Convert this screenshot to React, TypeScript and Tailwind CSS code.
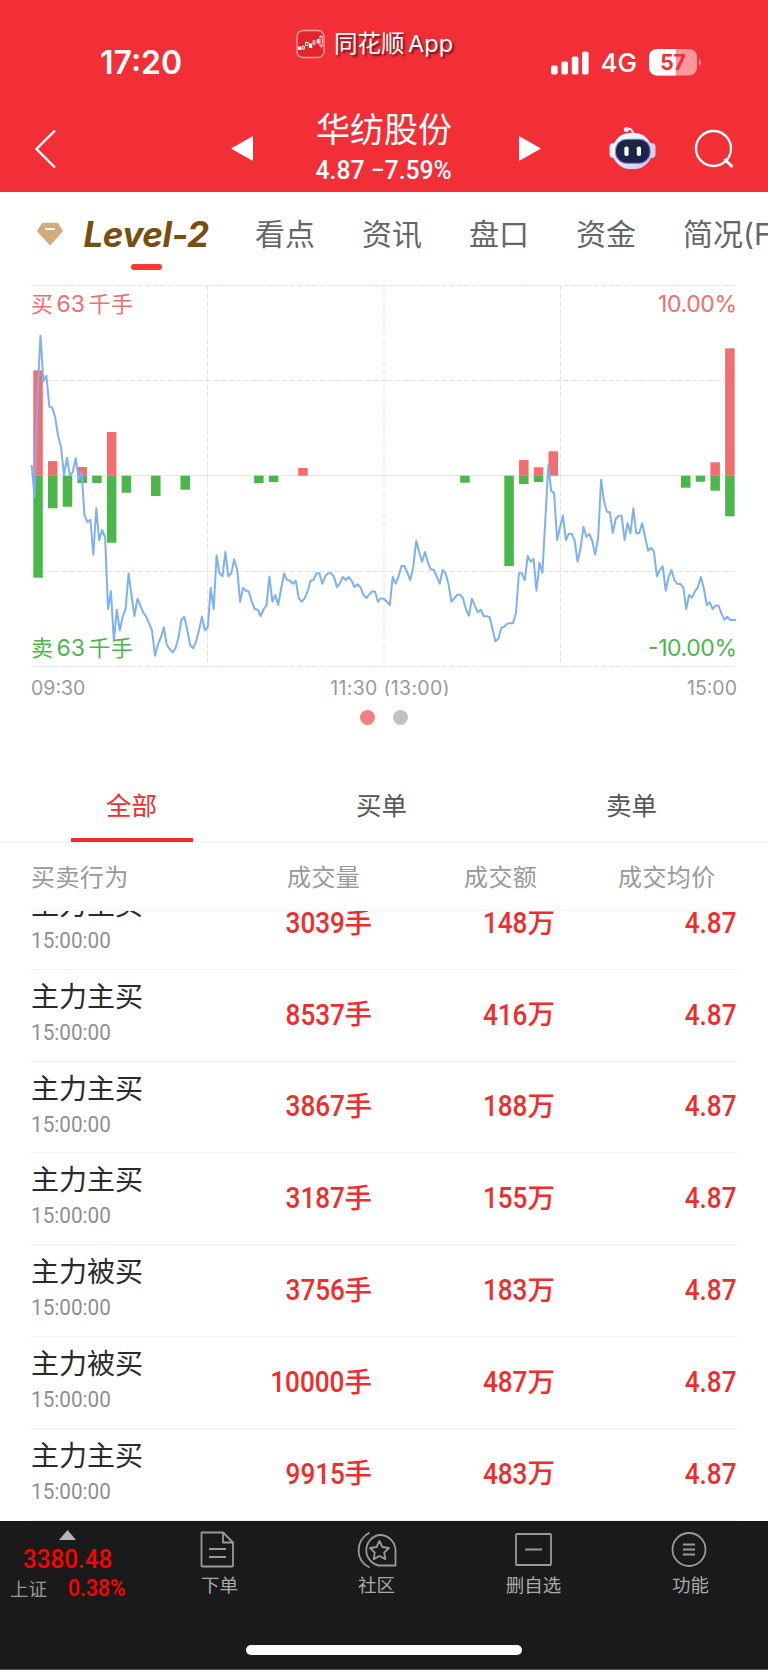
import type {ReactNode} from 'react'

const tabs = ['看点', '资讯', '盘口', '资金', '简况(F10)']

const trades = [
  {name: '主力主买', time: '15:00:00', volume: '3039', amount: '148', price: '4.87'},
  {name: '主力主买', time: '15:00:00', volume: '8537', amount: '416', price: '4.87'},
  {name: '主力主买', time: '15:00:00', volume: '3867', amount: '188', price: '4.87'},
  {name: '主力主买', time: '15:00:00', volume: '3187', amount: '155', price: '4.87'},
  {name: '主力被买', time: '15:00:00', volume: '3756', amount: '183', price: '4.87'},
  {name: '主力被买', time: '15:00:00', volume: '10000', amount: '487', price: '4.87'},
  {name: '主力主买', time: '15:00:00', volume: '9915', amount: '483', price: '4.87'},
]

// five-minute slot, buy height, sell height
const bars = [
  [0, 105.4, 102],
  [1, 14.6, 32.6],
  [2, 0, 31],
  [3, 8.7, 7.3],
  [4, 0, 7.3],
  [5, 43.7, 67],
  [6, 0, 17],
  [8, 0, 20.3],
  [10, 0, 14],
  [15, 0, 7.3],
  [16, 0, 6.3],
  [18, 7.7, 0],
  [29, 0, 7],
  [32, 0, 90.3],
  [33, 15.7, 8.3],
  [34, 8.4, 6.3],
  [35, 24.4, 0],
  [44, 0, 12],
  [45, 0, 6],
  [46, 13.4, 15],
  [47, 127.4, 40.6],
]

// one point per minute, in thirds of a pixel below the chart top
const price = [
  555, 652, 330, 167, 304, 287, 380, 383, 412, 468, 500, 586, 534, 586, 576, 534, 598, 577, 706, 726,
  719, 824, 685, 781, 750, 771, 987, 934, 1084, 989, 1051, 1010, 987, 880, 945, 1008, 956, 977, 998, 1010,
  1030, 1051, 1127, 1094, 1073, 1042, 1094, 1107, 1117, 1105, 1073, 1020, 1010, 1051, 1096, 1105, 1084, 1051, 1010, 1051,
  1041, 924, 987, 826, 880, 889, 816, 889, 880, 838, 869, 965, 924, 932, 935, 965, 987, 989, 1008, 988,
  976, 890, 965, 945, 975, 925, 881, 900, 902, 911, 902, 955, 965, 955, 934, 902, 900, 880, 880, 911,
  889, 880, 880, 890, 921, 911, 891, 900, 891, 902, 921, 913, 922, 944, 954, 944, 934, 935, 965, 955,
  956, 965, 975, 891, 911, 889, 858, 858, 879, 900, 860, 783, 815, 845, 816, 847, 868, 870, 890, 911,
  870, 879, 912, 965, 955, 944, 944, 956, 989, 1007, 956, 977, 997, 989, 1009, 1009, 1011, 1047, 1084, 1076,
  1043, 1040, 1031, 1030, 1030, 998, 880, 880, 900, 827, 845, 837, 932, 848, 878, 720, 556, 632, 640, 780,
  742, 707, 780, 761, 761, 782, 845, 805, 740, 770, 762, 783, 824, 772, 599, 664, 695, 697, 759, 716,
  707, 707, 780, 730, 760, 685, 760, 760, 730, 771, 812, 804, 814, 889, 870, 859, 932, 891, 870, 901,
  912, 912, 922, 987, 945, 953, 934, 922, 891, 924, 975, 967, 987, 976, 977, 1000, 1019, 1010, 1020, 1020,
  1020,
]

const linePoints = price.map((v, i) => `${(31.7 + i * 2.935).toFixed(1)},${(v / 3).toFixed(1)}`).join(' ')

export default function App() {
  return (
    <div className="flex h-[1670px] w-[768px] flex-col overflow-hidden bg-white font-['Inter','Noto_Sans_CJK_SC',sans-serif]">
      <Header />
      <TopTabs />
      <Chart />
      <Trades />
      <BottomBar />
    </div>
  )
}

function Header() {
  return (
    <header className="relative h-[192px] shrink-0 bg-[#f22f37] text-white">
      <div className="flex h-[100px] items-center justify-between pt-[25px] pr-[67px] pl-[100px]">
        <span className="text-[32px] leading-none font-semibold">17:20</span>
        <div className="flex items-center">
          <svg className="h-6 w-[38px]" viewBox="0 0 38 24" fill="currentColor">
            <rect x="0" y="14.5" width="6.6" height="9" rx="1.8" />
            <rect x="10.4" y="10.5" width="6.6" height="13" rx="1.8" />
            <rect x="20.8" y="5.5" width="6.6" height="18" rx="1.8" />
            <rect x="31" y="0.5" width="6.6" height="23" rx="1.8" />
          </svg>
          <span className="ml-3 text-[26px] leading-none font-medium">4G</span>
          <svg className="ml-[12px] h-[27px] w-[52px]" viewBox="0 0 52 27">
            <rect width="48" height="26.5" rx="8" fill="#f9979b" />
            <path d="M8 0H27V26.5H8A8 8 0 0 1 0 18.5V8A8 8 0 0 1 8 0Z" fill="#fff" />
            <path d="M50 9.5q2 1.5 2 3.75t-2 3.75Z" fill="#f9979b" />
            <text x="24" y="20.8" textAnchor="middle" fontSize="21" fontWeight="700" fill="#f22f37">
              57
            </text>
          </svg>
        </div>
      </div>

      <div className="flex h-[92px] items-center pl-[34px]">
        <svg className="mt-[5px] h-10 w-[22px] shrink-0" viewBox="0 0 22 40" fill="none" stroke="currentColor" strokeWidth="2.4">
          <path d="M21 1.5 2.5 20 21 38.5" />
        </svg>
        <svg className="mt-[4px] ml-[175px] h-[25px] w-[22px] shrink-0" viewBox="0 0 22 25" fill="currentColor">
          <path d="M0 12.5 22 0v25Z" />
        </svg>
        <div className="ml-[52px] flex w-[158px] shrink-0 flex-col items-center whitespace-nowrap">
          <h1 className="text-[34px] leading-[44px] font-normal">华纺股份</h1>
          <div className="mt-[4px] origin-center scale-x-[.95] font-['Roboto'] text-[26px] leading-[28px] font-medium">
            4.87 −7.59%
          </div>
        </div>
        <svg className="mt-[4px] ml-[56px] h-[25px] w-[22px] shrink-0" viewBox="0 0 22 25" fill="currentColor">
          <path d="M22 12.5 0 0v25Z" />
        </svg>
        <RobotIcon />
        <svg className="mt-[3px] ml-[38px] h-10 w-10 shrink-0" viewBox="0 0 40 40" fill="none" stroke="currentColor" strokeWidth="2.3">
          <circle cx="19.5" cy="20.5" r="17.5" />
          <path d="m30.5 31 8 8" strokeWidth="3" />
        </svg>
      </div>

      <div className="absolute top-[28px] left-[296px] flex items-center">
        <svg className="h-[30px] w-[30px]" viewBox="0 0 30 30">
          <rect x="1" y="1.5" width="27" height="27" rx="6" fill="#e3242a" stroke="#f9a0a3" strokeWidth="1.3" />
          <g fill="#fff">
            <rect x="2" y="17.5" width="3.5" height="3.5" />
            <rect x="13" y="14.5" width="3.2" height="4.5" />
            <rect x="20.8" y="10" width="2.5" height="4.5" />
          </g>
          <g fill="none" stroke="#fff" strokeWidth=".8">
            <path d="M7.500 16.500v1M7.500 20v1M10.700 12v1.500M18 11v1M18 15v1M25.100 6v1.500M25.100 17v1.500" />
            <rect x="6.5" y="17.5" width="2" height="2.5" />
            <rect x="9.5" y="13.5" width="2.5" height="3" />
            <rect x="17" y="12" width="2" height="3" />
            <rect x="24" y="7.5" width="2.2" height="9.5" />
          </g>
        </svg>
        <span className="ml-[8px] text-[23.5px] leading-[32px] [word-spacing:-3px] whitespace-nowrap [text-shadow:2px_2px_2px_rgba(0,0,0,.55)]">
          同花顺 App
        </span>
      </div>
    </header>
  )
}

function RobotIcon() {
  return (
    <svg className="mt-[4px] ml-[68px] h-[44px] w-[47px] shrink-0" viewBox="0 0 47 44">
      <defs>
        <linearGradient id="shell" x1="0" y1="0" x2="1" y2="1">
          <stop offset="0" stopColor="#ffffff" />
          <stop offset=".5" stopColor="#eceafa" />
          <stop offset="1" stopColor="#bfc1e4" />
        </linearGradient>
        <linearGradient id="rim" x1="0" y1="0" x2="1" y2="1">
          <stop offset="0" stopColor="#62c9e8" />
          <stop offset=".5" stopColor="#8a5cf0" />
          <stop offset="1" stopColor="#5a6cf0" />
        </linearGradient>
      </defs>
      <path d="M17.500 3q6-1.500 6.500 5" fill="none" stroke="#f7eefb" strokeWidth="2" />
      <circle cx="17.3" cy="3.5" r="2.5" fill="#f7eefb" />
      <rect x="0.5" y="17" width="8" height="15" rx="4" fill="#efedfb" />
      <rect x="38.5" y="17" width="8" height="15" rx="4" fill="#d3d3ef" />
      <rect x="3.5" y="7" width="39.5" height="36" rx="17.5" fill="url(#shell)" />
      <rect x="6" y="12.7" width="35.5" height="25" rx="11.5" fill="url(#rim)" />
      <rect x="7" y="13.7" width="33.5" height="23" rx="10.5" fill="#1d2547" />
      <rect x="15.4" y="20.5" width="4.2" height="9.5" rx="1.8" fill="#fff" />
      <rect x="27.8" y="20.5" width="4.2" height="9.5" rx="1.8" fill="#fff" />
    </svg>
  )
}

function TopTabs() {
  return (
    <nav className="flex h-[88px] shrink-0 overflow-hidden pl-[37px] text-[#666]">
      <svg className="mt-[30px] h-6 w-[26px] shrink-0" viewBox="0 0 26 24">
        <path d="M6 .8h14q1 0 1.500.9l4 6.500q.6 1-.2 1.900L14 22.500q-1 1-2 0L.7 10.100Q-.1 9.200.5 8.200l4-6.500Q5 .8 6 .8Z" fill="#d1ad7b" />
        <path d="M9 7h8" stroke="#fff" strokeWidth="2" strokeLinecap="round" />
      </svg>
      <div className="ml-[19px] flex w-[128px] shrink-0 flex-col items-center">
        <span className="mt-[21px] text-[35px] leading-[42px] font-bold tracking-[-.4px] whitespace-nowrap text-[#7a4d10] italic">
          Level-2
        </span>
        <span className="mt-[9px] h-[6px] w-[31px] rounded-full bg-[#ff3830]" />
      </div>
      <div className="ml-[45px] flex shrink-0 gap-[47px] pt-[20px] text-[30px] leading-[44px] whitespace-nowrap">
        {tabs.map((tab) => (
          <span key={tab}>{tab}</span>
        ))}
      </div>
    </nav>
  )
}

function Chart() {
  return (
    <section className="flex h-[490px] shrink-0 flex-col">
      <svg className="h-[390px] w-[768px] shrink-0" viewBox="0 0 768 390">
        <g stroke="#e3e3e3" strokeWidth="1" strokeDasharray="5.5 2.1">
          <path d="M31 5.5H737M31 100.5H737M31 291.5H737M31 386.5H737" />
          <path d="M207.5 5.5V386.5M384 5.5V386.5M560.5 5.5V386.5" />
        </g>
        <path d="M31 195.7H737" stroke="#e3e3e3" />
        {bars.map(([slot, buy, sell]) => (
          <g key={slot}>
            <rect x={33.3 + slot * 14.72} y={195.7 - buy} width="9.5" height={buy} fill="#f26d6d" />
            <rect x={33.3 + slot * 14.72} y="195.7" width="9.5" height={sell} fill="#4bb74b" />
          </g>
        ))}
        <polyline points={linePoints} fill="none" stroke="#7db1f2" strokeWidth="2" strokeLinejoin="round" />
        <g fontSize="22" fill="#f26d6d">
          <text x="31" y="32">买</text>
          <text x="56.5" y="32" fontSize="23" textLength="28.5">63</text>
          <text x="88.5" y="32" textLength="44.5">千手</text>
          <text x="737" y="32" fontSize="23" textAnchor="end" textLength="79">10.00%</text>
        </g>
        <g fontSize="22" fill="#4bb74b">
          <text x="31" y="376">卖</text>
          <text x="56.5" y="376" fontSize="23" textLength="28.5">63</text>
          <text x="88.5" y="376" textLength="44.5">千手</text>
          <text x="737" y="376" fontSize="23" textAnchor="end" textLength="89">-10.00%</text>
        </g>
      </svg>
      <div className="flex h-[26px] shrink-0 justify-between overflow-hidden px-[31px] pt-[6px] text-[19.5px] leading-[24px] text-[#999]">
        <span>09:30</span>
        <span className="pl-[8px] tracking-[.3px] whitespace-nowrap">11:30 (13:00)</span>
        <span>15:00</span>
      </div>
      <div className="mt-[14px] flex justify-center gap-[18px]">
        <span className="h-[15px] w-[15px] rounded-full bg-[#f48080]" />
        <span className="h-[15px] w-[15px] rounded-full bg-[#c1c1c1]" />
      </div>
    </section>
  )
}

function Trades() {
  return (
    <section className="flex h-[751px] shrink-0 flex-col">
      <div className="flex h-[73px] shrink-0 border-b border-[#efefef] pl-[7px] text-[25.5px] leading-[36px] text-[#555]">
        <div className="flex w-[250px] flex-col items-center justify-between pt-[18px] text-[#f02d2d]">
          <span className="-ml-px">全部</span>
          <span className="h-[4px] w-[122px] bg-[#f02d2d]" />
        </div>
        <div className="w-[249px] pt-[18px] text-center">买单</div>
        <div className="w-[251px] pt-[18px] text-center">卖单</div>
      </div>
      <div className="mx-[31px] flex h-[68px] shrink-0 items-center border-b border-[#f3f3f3] pt-[2px] text-[24px] tracking-[.4px] text-[#999]">
        <span className="w-[256px]">买卖行为</span>
        <span className="w-[177px]">成交量</span>
        <span className="w-[154px]">成交额</span>
        <span>成交均价</span>
      </div>
      <div className="min-h-0 flex-1 overflow-hidden px-[31px]">
        <div className="-mt-[33px]">
          {trades.map((trade, i) => (
            <div key={i} className="flex h-[91.8px] border-b border-[#f1f1f1]">
              <div className="w-[150px] pt-[8px]">
                <div className="text-[28px] leading-[38px] whitespace-nowrap text-[#2b2b2b]">{trade.name}</div>
                <div className="origin-left scale-x-[.92] pt-[3px] font-['Roboto'] text-[22.5px] leading-[26px] text-[#8f8f8f]">
                  {trade.time}
                </div>
              </div>
              <Amount className="w-[191px]" unit="手">{trade.volume}</Amount>
              <Amount className="w-[183px]" unit="万">{trade.amount}</Amount>
              <Amount className="w-[182px]">{trade.price}</Amount>
            </div>
          ))}
        </div>
      </div>
    </section>
  )
}

function Amount({children, unit, className}: {children: ReactNode; unit?: string; className: string}) {
  return (
    <div className={`flex items-center justify-end text-[#f02d2d] ${className}`}>
      <span className="origin-right scale-x-[.9] font-['Roboto'] text-[29px] leading-none font-medium">{children}</span>
      {unit ? <span className="text-[27.5px] leading-none font-medium">{unit}</span> : null}
    </div>
  )
}

function BottomBar() {
  return (
    <footer className="flex h-[149px] shrink-0 flex-col border-b border-[#555] bg-[#1a1a1a] text-[#999]">
      <div className="flex h-[124px]">
        <div className="flex w-[141px] shrink-0 flex-col pl-[10px]">
          <svg className="mt-[9px] ml-[49px] h-[10px] w-[17px]" viewBox="0 0 17 10" fill="#b5b5b5">
            <path d="M8.500 0 17 10H0Z" />
          </svg>
          <span className="ml-[13px] origin-left scale-x-[.93] pt-[4px] font-['Roboto'] text-[26px] leading-[30px] font-medium text-[#f00]">
            3380.48
          </span>
          <div className="mt-px flex items-center">
            <span className="text-[18.5px] leading-[28px]">上证</span>
            <span className="ml-[21px] origin-left scale-x-[.92] font-['Roboto'] text-[23px] leading-[28px] font-medium text-[#f00]">
              0.38%
            </span>
          </div>
        </div>
        <BarItem label="下单">
          <path d="M1.500 3.500H23L33 13.500V36.500a1 1 0 0 1-1 1H2.500a1 1 0 0 1-1-1ZM23 3.500V13.500H33M9 20H26M9 28H26" />
        </BarItem>
        <BarItem label="社区">
          <path d="M23 6a15.500 15.500 0 0 1 15.500 15.500V36.500H22a15.500 15.500 0 0 1 0-30.500ZM12.500 3.500C-2 12-2 31 12.500 38.500" />
          <path d="m22.500 12 2.900 6 6.500 1-4.700 4.600 1.100 6.500-5.800-3.100-5.800 3.100 1.100-6.500-4.700-4.600 6.500-1Z" />
        </BarItem>
        <BarItem label="删自选">
          <path d="M3 5H36a1 1 0 0 1 1 1V35a1 1 0 0 1-1 1H3a1 1 0 0 1-1-1V6a1 1 0 0 1 1-1ZM11 20.500H28" />
        </BarItem>
        <BarItem label="功能">
          <path d="M18 4a16.500 16.500 0 1 1 0 33a16.500 16.500 0 1 1 0-33ZM12 15.500H24M12 20.500H24M12 25.500H24" />
        </BarItem>
      </div>
      <div className="ml-[246px] h-[10px] w-[276px] rounded-full bg-white" />
    </footer>
  )
}

function BarItem({label, children}: {label: string; children: ReactNode}) {
  return (
    <div className="flex w-[157px] shrink-0 flex-col items-center pt-[8px]">
      <svg className="h-10 w-10" viewBox="0 0 40 40" fill="none" stroke="currentColor" strokeWidth="1.8" strokeLinejoin="round">
        {children}
      </svg>
      <span className="mt-[2px] text-[18.5px] leading-[28px] text-[#aaa]">{label}</span>
    </div>
  )
}
